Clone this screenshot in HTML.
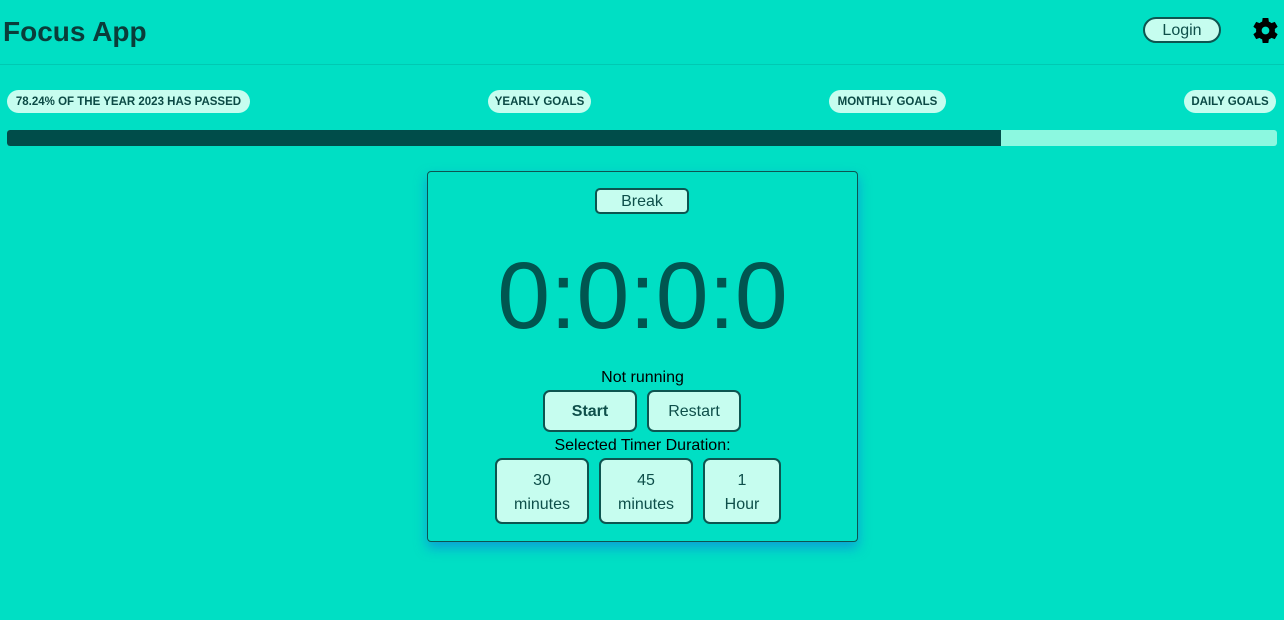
<!DOCTYPE html>
<html><head><style>
*{box-sizing:border-box;margin:0;padding:0}
body{width:1284px;height:620px;background:#00dfc4;font-family:"Liberation Sans","DejaVu Sans",sans-serif;position:relative;overflow:hidden;color:#003d38}
.a{position:absolute}
.pill{position:absolute;top:90px;height:23px;background:#c6fdef;border-radius:12px;font-size:11.5px;font-weight:bold;color:#0b4a45;display:flex;align-items:center;justify-content:center;white-space:nowrap}
.btn{position:absolute;background:#c6fdef;border:2px solid #0d5550;border-radius:7px;color:#0e4f4a;display:flex;align-items:center;justify-content:center;text-align:center;font-size:16px;line-height:24px}
</style></head><body>
<div class="a" style="left:3px;top:16px;font-size:28px;font-weight:bold;color:#0a3d3a">Focus App</div>
<div class="a" style="left:0;top:64px;width:1284px;height:1px;background:#00c9b2"></div>
<div class="btn" style="left:1143px;top:17px;width:78px;height:26px;border-radius:13px;padding-top:2px">Login</div>
<svg class="a" style="left:1250px;top:15px" width="31" height="31" viewBox="0 0 24 24"><path fill="#000" fill-rule="evenodd" d="M19.6 13.2a7.8 7.8 0 0 0 0-2.4l2.2-1.7-2.2-3.8-2.6 1a7.6 7.6 0 0 0-2-1.2L14.6 2.3h-4.4l-.4 2.8a7.6 7.6 0 0 0-2 1.2l-2.6-1-2.2 3.8 2.2 1.7a7.8 7.8 0 0 0 0 2.4l-2.2 1.7 2.2 3.8 2.6-1a7.6 7.6 0 0 0 2 1.2l.4 2.8h4.4l.4-2.8a7.6 7.6 0 0 0 2-1.2l2.6 1 2.2-3.8zM12.4 15a3 3 0 1 1 0-6 3 3 0 0 1 0 6z" transform="translate(-.4 0)"/></svg>
<div class="pill" style="left:7px;width:243px">78.24% OF THE YEAR 2023 HAS PASSED</div>
<div class="pill" style="left:488px;width:103px">YEARLY GOALS</div>
<div class="pill" style="left:829px;width:117px">MONTHLY GOALS</div>
<div class="pill" style="left:1184px;width:92px">DAILY GOALS</div>
<div class="a" style="left:7px;top:130px;width:1270px;height:16px;background:#8cf8e0;border-radius:3px;overflow:hidden"><div style="width:994px;height:16px;background:#004d4a"></div></div>
<div class="a" style="left:427px;top:171px;width:431px;height:371px;border:1px solid #0d5550;border-radius:4px;box-shadow:0 6px 12px rgba(20,110,230,.55)"></div>
<div class="btn" style="left:595px;top:188px;width:94px;height:26px;border-radius:5px;padding-top:2px">Break</div>
<div class="a" style="left:427px;top:241px;width:431px;text-align:center;font-size:95px;color:#005650;line-height:110px">0:0:0:0</div>
<div class="a" style="left:427px;top:369px;width:431px;text-align:center;font-size:16px;color:#000">Not running</div>
<div class="btn" style="left:543px;top:390px;width:94px;height:42px;font-weight:bold;padding-top:2px">Start</div>
<div class="btn" style="left:647px;top:390px;width:94px;height:42px;padding-top:2px">Restart</div>
<div class="a" style="left:427px;top:437px;width:431px;text-align:center;font-size:16px;color:#000">Selected Timer Duration:</div>
<div class="btn" style="left:495px;top:458px;width:94px;height:66px;padding-top:3px">30<br>minutes</div>
<div class="btn" style="left:599px;top:458px;width:94px;height:66px;padding-top:3px">45<br>minutes</div>
<div class="btn" style="left:703px;top:458px;width:78px;height:66px;padding-top:3px">1<br>Hour</div>
</body></html>
